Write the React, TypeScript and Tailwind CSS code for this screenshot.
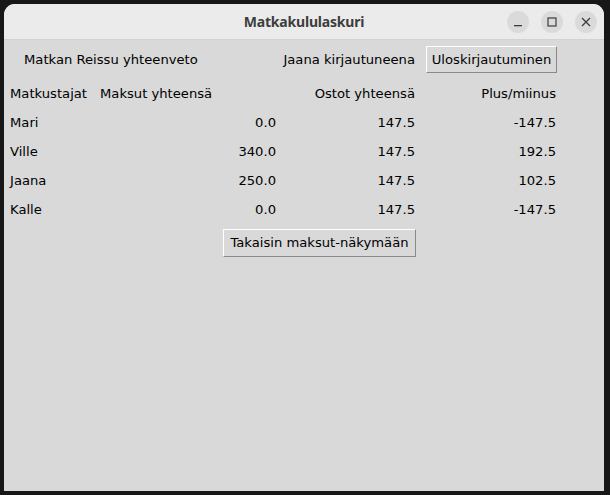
import React from "react";

const rows = [
  { name: "Mari", pay: "0.0", buy: "147.5", diff: "-147.5" },
  { name: "Ville", pay: "340.0", buy: "147.5", diff: "192.5" },
  { name: "Jaana", pay: "250.0", buy: "147.5", diff: "102.5" },
  { name: "Kalle", pay: "0.0", buy: "147.5", diff: "-147.5" },
];

const btn =
  "flex items-center justify-center bg-[#d9d9d9] border border-t-[#ffffff] border-l-[#ffffff] border-b-[#8a8a8a] border-r-[#8a8a8a] text-black";

export default function App() {
  return (
    <div className="w-[610px] h-[495px] bg-[#171717] p-[4px] pb-[4px]">
      <div className="w-[600px] h-[487px] flex flex-col rounded-t-[11px] overflow-hidden bg-[#d9d9d9]">
        <div className="h-[36px] shrink-0 bg-[#ebebeb] border-b border-[#d2d2d2] relative flex items-center justify-center">
          <span
            className="text-[14px] font-bold text-[#3d3d3d] tracking-[-0.2px]"
            style={{ fontFamily: '"Noto Sans", sans-serif' }}
          >
            Matkakululaskuri
          </span>
          <div className="absolute right-[7px] top-[7px] flex gap-[12px]">
            <div className="w-[22px] h-[22px] rounded-full bg-[#dadada] flex items-center justify-center">
              <svg width="12" height="12" viewBox="0 0 12 12">
                <rect x="2" y="9" width="8" height="1.3" fill="#3d3d3d" />
              </svg>
            </div>
            <div className="w-[22px] h-[22px] rounded-full bg-[#dadada] flex items-center justify-center">
              <svg width="12" height="12" viewBox="0 0 12 12">
                <rect x="2" y="2" width="8" height="8" fill="none" stroke="#3d3d3d" strokeWidth="1.2" />
              </svg>
            </div>
            <div className="w-[22px] h-[22px] rounded-full bg-[#dadada] flex items-center justify-center">
              <svg width="12" height="12" viewBox="0 0 12 12">
                <path d="M2 2 L10 10 M10 2 L2 10" stroke="#3d3d3d" strokeWidth="1.3" />
              </svg>
            </div>
          </div>
        </div>
        <div
          className="flex flex-col pl-[6px] text-[13.15px] text-black"
          style={{ fontFamily: '"DejaVu Sans", sans-serif' }}
        >
          <div className="grid grid-cols-[90px_176px_139px_141px] h-[27px] mt-[6px] items-center">
            <div className="col-span-2 pl-[14px]">Matkan Reissu yhteenveto</div>
            <div className="text-right">Jaana kirjautuneena</div>
            <div className="pl-[11px] h-full">
              <div className={btn + " w-[131px] h-full"}>Uloskirjautuminen</div>
            </div>
          </div>
          <div className="grid grid-cols-[90px_176px_139px_141px] h-[29px] mt-[6px] items-center">
            <div>Matkustajat</div>
            <div>Maksut yhteensä</div>
            <div className="text-right">Ostot yhteensä</div>
            <div className="text-right">Plus/miinus</div>
          </div>
          {rows.map((r) => (
            <div key={r.name} className="grid grid-cols-[90px_176px_139px_141px] h-[29px] items-center">
              <div>{r.name}</div>
              <div className="text-right">{r.pay}</div>
              <div className="text-right">{r.buy}</div>
              <div className="text-right">{r.diff}</div>
            </div>
          ))}
          <div className="grid grid-cols-[90px_315px_141px] mt-[5px]">
            <div />
            <div className="flex justify-end -mr-px">
              <div className={btn + " w-[193px] h-[28px]"}>Takaisin maksut-näkymään</div>
            </div>
          </div>
        </div>
      </div>
    </div>
  );
}
